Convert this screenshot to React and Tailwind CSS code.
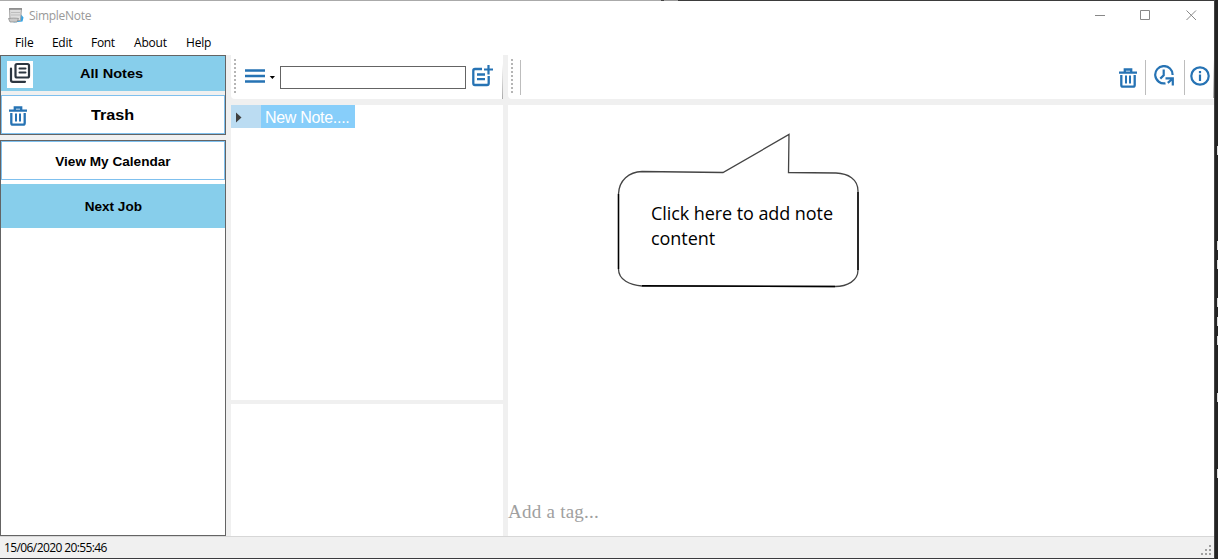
import React from "react";

const UI = "font-['Open_Sans','Noto_Sans',sans-serif]";
const SANS = "font-['Liberation_Sans',Arial,sans-serif]";

function AppIcon() {
  return (
    <svg width="16" height="17" viewBox="0 0 16 17" className="shrink-0">
      <path d="M12 6L15.500 10.500L14.500 14.500L5 15.500L10 13Z" fill="#35a4e4" />
      <path d="M1.500 1.500H13.500L12.500 13.500H2Z" fill="#dedede" stroke="#a2a2a2" />
      <path d="M1 2H14" stroke="#888" strokeWidth="1.500" />
      <path d="M3 5.500H12M3 8H12" stroke="#bdbdbd" />
      <path d="M.5 11.500C4 11 8 11 10.500 11.500L9 15H2Z" fill="#c9c9c9" stroke="#888" strokeWidth=".7" />
    </svg>
  );
}

function NotesIcon() {
  return (
    <svg width="26" height="27" viewBox="0 0 26 27" fill="none" stroke="#2c3640" strokeWidth="2.200" strokeLinecap="round" className="shrink-0 bg-white">
      <rect x="8.500" y="3" width="13.500" height="13.500" rx="1.500" />
      <path d="M12.500 7.500H18.500M12.500 11.500H18.500" strokeWidth="2" />
      <path d="M4 7.500V19Q4 20.800 5.800 20.800H18" />
    </svg>
  );
}

function TrashIcon() {
  return (
    <svg width="18" height="20" viewBox="0 0 18 20" fill="none" stroke="#2673b4" strokeWidth="2.300" className="shrink-0">
      <path d="M0 4.600H18M5.800 4V1.500H12.200V4" />
      <path d="M2.300 7V17Q2.300 18.700 4 18.700H14Q15.700 18.700 15.700 17V7" />
      <path d="M7 7.500V15.500M11 7.500V15.500" strokeWidth="2" />
    </svg>
  );
}

function AddNoteIcon() {
  return (
    <svg width="21" height="22" viewBox="0 0 21 22" fill="none" stroke="#2673b4" strokeWidth="2.300" className="shrink-0">
      <path d="M10 4H3Q1.300 4 1.300 5.700V18.300Q1.300 20 3 20H15Q16.700 20 16.700 18.300V11" />
      <path d="M5 9.500H13M5 14.200H13" />
      <path d="M16.500 0V9.500M12 4.500H21" strokeWidth="2.200" />
    </svg>
  );
}

function HistoryIcon() {
  return (
    <svg width="21" height="21" viewBox="0 0 21 21" fill="none" stroke="#2673b4" strokeWidth="2.200" className="shrink-0">
      <path d="M18.600 10A8.700 8.700 0 1 0 11.500 18.300" />
      <path d="M9.700 4.500V10.200L6.300 13.600" />
      <path d="M11.500 13.300H18.800V20.500M18.300 14L13.800 17.800" />
    </svg>
  );
}

function InfoIcon() {
  return (
    <svg width="20" height="20" viewBox="0 0 20 20" fill="none" stroke="#2673b4" strokeWidth="2.200" className="shrink-0">
      <circle cx="10" cy="10" r="8.700" />
      <path d="M10 8.500V15M10 5V7.200" />
    </svg>
  );
}

function Grip() {
  return (
    <div className="flex w-0.5 shrink-0 flex-col gap-0.5">
      {Array.from({ length: 9 }, (_, i) => (
        <i key={i} className="h-0.5 w-0.5 bg-[#b5b5b5]" />
      ))}
    </div>
  );
}

function TitleBar() {
  return (
    <header className={`flex h-[29px] shrink-0 items-start pl-2 text-[#999] ${UI}`}>
      <div className="pt-[6px]"><AppIcon /></div>
      <span className="ml-[5px] pt-[6px] text-[12px] leading-[18px] tracking-[-0.3px]">SimpleNote</span>
      <svg width="102" height="12" viewBox="0 0 102 12" fill="none" stroke="#888" className="mt-[8px] mr-[17px] ml-auto shrink-0">
        <path d="M0 6.500H10M45.500 1.500H54.500V10.500H45.500ZM91.500 1.500L101 11M101 1.500L91.500 11" />
      </svg>
    </header>
  );
}

function MenuBar() {
  return (
    <nav className={`flex h-[25px] shrink-0 pt-1 pl-[15px] text-[12px] leading-[18px] text-black ${UI}`}>
      <span className="w-[37px] tracking-[-0.1px]">File</span>
      <span className="w-[39px] tracking-[-0.3px]">Edit</span>
      <span className="w-[43px] tracking-[-0.3px]">Font</span>
      <span className="w-[52px] tracking-[-0.2px]">About</span>
      <span className="tracking-[-0.2px]">Help</span>
    </nav>
  );
}

function Sidebar() {
  return (
    <aside className={`flex w-[226px] shrink-0 flex-col font-bold text-black ${SANS}`}>
      <div className="flex h-20 shrink-0 flex-col gap-1 border border-[#646464] bg-[#f0f0f0]">
        <div className="flex h-[35px] shrink-0 items-start bg-[#87ceeb] pt-[5px] pl-1.5">
          <NotesIcon />
          <span className="mt-[4px] ml-[47px] origin-left scale-x-[1.12] text-[13px] leading-[18px]">All Notes</span>
        </div>
        <div className="flex flex-1 items-start border border-[#7fc0ee] bg-white pt-[10px] pl-[7px]">
          <TrashIcon />
          <span className="ml-[64px] origin-left scale-x-[1.08] text-[15px] leading-[18px]">Trash</span>
        </div>
      </div>
      <div className="mt-[5px] flex flex-1 flex-col border border-[#646464] bg-white text-center">
        <div className="h-[39px] shrink-0 border border-[#7fc0ee] pt-[11px] text-[12px] leading-[18px]">
          <span className="inline-block scale-x-[1.133]">View My Calendar</span>
        </div>
        <div className="mt-1 h-11 bg-[#87ceeb] pt-[14px] text-[12px] leading-[18px]">
          <span className="inline-block scale-x-[1.13]">Next Job</span>
        </div>
      </div>
    </aside>
  );
}

function NoteList() {
  return (
    <section className="flex w-[272px] shrink-0 flex-col">
      <div className="flex h-11 shrink-0 items-start rounded-bl bg-white pt-1 pl-[3px]">
        <Grip />
        <svg width="30" height="16" viewBox="0 0 30 16" className="mt-[9px] ml-[9px] shrink-0">
          <path d="M0 2.500H20M0 8H20M0 13.500H20" stroke="#2673b4" strokeWidth="2.300" />
          <path d="M24.700 8H30L27.400 11Z" fill="#000" />
        </svg>
        <input className="mt-[7px] ml-[5px] h-[23px] w-[186px] border border-[#646464] bg-white outline-none" />
        <div className="mt-[6px] ml-[6px]"><AddNoteIcon /></div>
        <div className="mt-[5px] ml-auto h-[35px] w-px bg-linear-to-b from-white to-[#aaa]" />
      </div>
      <div className="mt-1.5 h-[295px] shrink-0 bg-white">
        <div className="flex h-[23px] w-[124px] bg-[#87cefa]">
          <div className="flex w-[30px] items-center bg-[#bbdcf2] pt-[2px] pl-[5px]">
            <svg width="6" height="11" viewBox="0 0 6 11"><path d="M0 .5L5.500 5.500L0 10.500Z" fill="#404040" /></svg>
          </div>
          <span className={`pt-[3px] pl-1 text-[16px] leading-5 tracking-[-0.3px] whitespace-nowrap text-white ${SANS}`}>New Note....</span>
        </div>
      </div>
      <div className="mt-1 flex-1 bg-white" />
    </section>
  );
}

function Bubble() {
  return (
    <div className="relative h-[160px] w-[244px]">
      <svg width="244" height="160" viewBox="0 0 244 160" fill="none" className="absolute inset-0">
        <path d="M26 41.500L107 42.500L173 4.500L172.500 42.500L220 43C232 43.500 242 49 242 61V140C242 151 231 156.500 219 156.500L26 156C14 155 2.500 150 2.500 139V64C3 50 13 42 26 41.500Z" stroke="#444" strokeWidth="1.300" />
        <path d="M2.500 64V139M26 155.800L219 156.500M242 62V140" stroke="#000" strokeWidth="1.400" />
      </svg>
      <p className="relative pt-[71px] pl-[35px] font-['Open_Sans','Noto_Sans',sans-serif] text-[18px] leading-[25px] tracking-[-0.07px] whitespace-nowrap text-black">
        Click here to add note<br />content
      </p>
    </div>
  );
}

function Editor() {
  return (
    <section className="ml-[5px] flex min-w-0 flex-1 flex-col">
      <div className="flex h-11 shrink-0 items-start rounded-bl bg-white pt-1 pl-[3px]">
        <Grip />
        <div className="mt-px ml-[7px] h-[35px] w-px bg-[#bdbdbd]" />
        <div className="ml-auto pt-[9px]"><TrashIcon /></div>
        <div className="mt-px ml-2 h-[35px] w-px bg-[#bdbdbd]" />
        <div className="ml-2 pt-[6px]"><HistoryIcon /></div>
        <div className="mt-px ml-[9px] h-[35px] w-px bg-[#bdbdbd]" />
        <div className="mr-[3px] ml-[5px] pt-[7px]"><InfoIcon /></div>
        <div className="h-[39px] w-px bg-linear-to-b from-white to-[#aaa]" />
      </div>
      <div className="mt-1.5 flex flex-1 flex-col justify-between bg-white">
        <div className="pt-[25px] pl-[108px]"><Bubble /></div>
        <p className="pb-[12px] font-['Liberation_Serif',serif] text-[19px] leading-6 tracking-[0.25px] text-[#a0a0a0]">Add a tag...</p>
      </div>
    </section>
  );
}

function StatusBar() {
  return (
    <footer className={`flex h-[22px] shrink-0 justify-between border-t border-[#d7d7d7] bg-[#f0f0f0] pl-1 text-black ${UI}`}>
      <span className="pt-[2px] text-[12px] leading-[18px] tracking-[-0.6px]">15/06/2020 20:55:46</span>
      <svg width="11" height="11" viewBox="0 0 11 11" className="mt-2 mr-[3px]" fill="#a0a0a0">
        <path d="M9 0h2v2h-2zM5 4h2v2h-2zM9 4h2v2h-2zM1 8h2v2h-2zM5 8h2v2h-2zM9 8h2v2h-2z" />
      </svg>
    </footer>
  );
}

export default function App() {
  return (
    <div className="flex h-[559px] w-[1218px] overflow-hidden bg-[#242424]">
      <div className="flex w-[1214px] shrink-0 flex-col bg-white">
        <div className="flex h-px shrink-0 bg-[#aaa]">
          <i className="ml-[661px] w-[3px] bg-[#444]" />
          <i className="w-[14px] bg-[#999]" />
          <i className="flex-1 bg-[#3b3b3b]" />
        </div>
        <TitleBar />
        <MenuBar />
        <main className="flex min-h-0 flex-1 bg-[#f0f0f0]">
          <Sidebar />
          <div className="w-[5px] shrink-0" />
          <NoteList />
          <Editor />
        </main>
        <StatusBar />
        <div className="h-px shrink-0 bg-[#3b3b3f]" />
      </div>
      <div className="w-px bg-[#444]" />
      <svg width="3" height="559" viewBox="0 0 3 559" className="shrink-0">
        <path d="M2.500 146v9M2.500 241v9M2.500 260v9M2.500 298v9M2.500 317v9M2.500 336v9M2.500 393v9M2.500 469v9" stroke="#ddd" />
      </svg>
    </div>
  );
}
